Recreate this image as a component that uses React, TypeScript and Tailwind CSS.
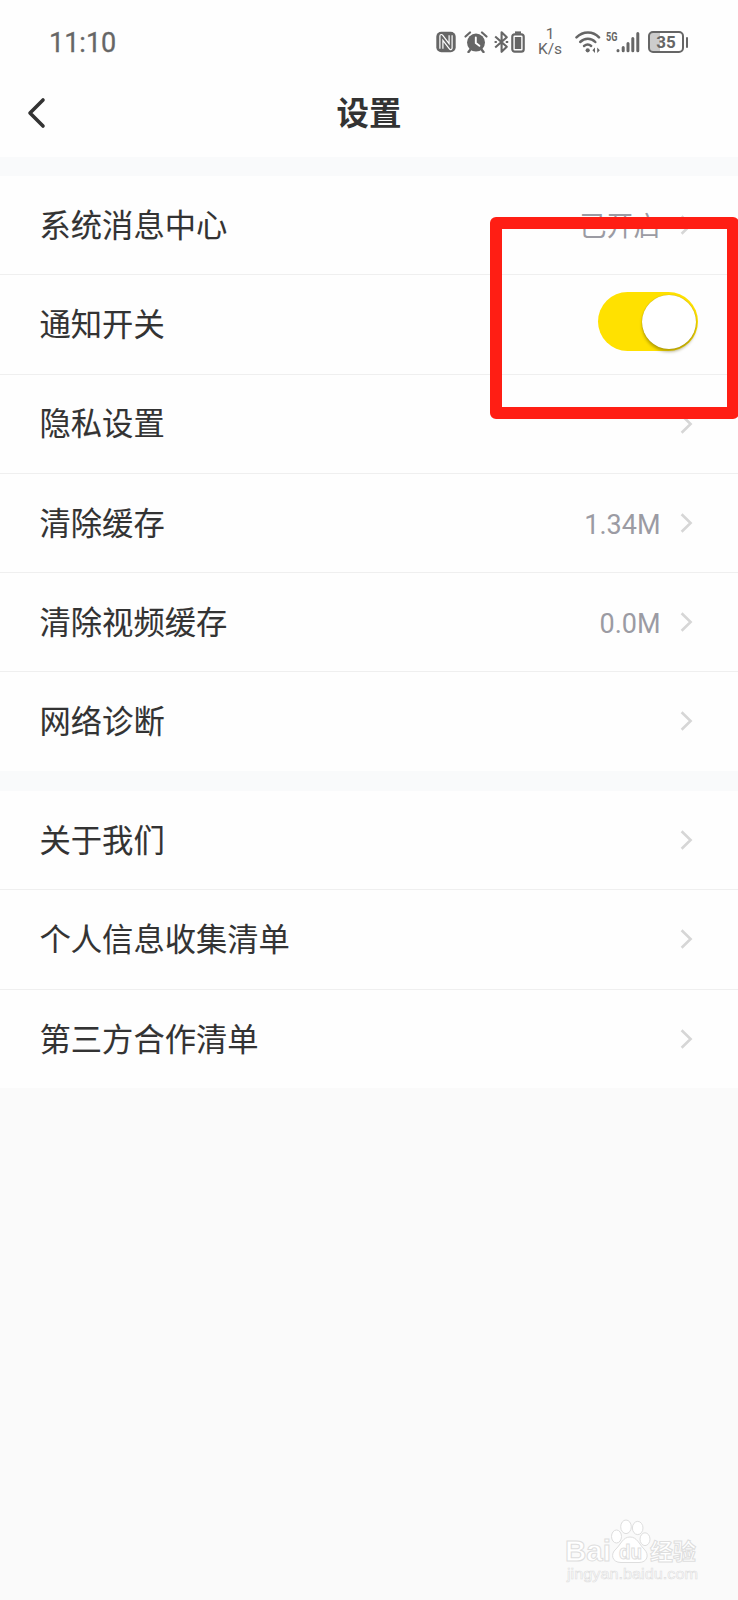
type RowItem = {
    label: string;
    value?: string;
    toggle?: boolean;
};

const generalItems: RowItem[] = [
    { label: '系统消息中心', value: '已开启' },
    { label: '通知开关', toggle: true },
    { label: '隐私设置' },
    { label: '清除缓存', value: '1.34M' },
    { label: '清除视频缓存', value: '0.0M' },
    { label: '网络诊断' },
];

const aboutItems: RowItem[] = [
    { label: '关于我们' },
    { label: '个人信息收集清单' },
    { label: '第三方合作清单' },
];

const StatusBar = () => {
    return (
        <div className="flex h-[84px] items-center pl-[49px] pr-[50px] text-[#666]">
            <span className="pt-[2px] font-['Roboto','Noto_Sans_CJK_SC',sans-serif] text-[27px] leading-none [-webkit-text-stroke:0.3px_#666]">11:10</span>
            <div className="ml-auto flex items-center">
                {/* nfc */}
                <svg className="mr-2" width="20" height="22" viewBox="0 0 20 22" fill="none">
                    <rect x="0.3" y="0.8" width="19.4" height="20.4" rx="5" fill="#666" />
                    <path d="M5.4 17.8V5L14.6 17V4.2" stroke="#fff" strokeWidth="4.2" strokeLinejoin="round" />
                    <path d="M5.4 19V5L14.6 17V3" stroke="#666" strokeWidth="1.8" strokeLinejoin="round" />
                </svg>
                {/* alarm */}
                <svg className="mr-[6px]" width="24" height="22" viewBox="0 0 24 22" fill="none">
                    <circle cx="12" cy="11.6" r="9" fill="#666" />
                    <path d="M6.5 18.5L4.5 21M17.5 18.5L19.5 21" stroke="#666" strokeWidth="2.4" strokeLinecap="round" />
                    <path d="M1.5 5.5L6 1.5M22.5 5.5L18 1.5" stroke="#666" strokeWidth="2.2" strokeLinecap="round" />
                    <path d="M11.8 6.5V12L15.4 14.8" stroke="#fff" strokeWidth="1.9" strokeLinecap="round" />
                </svg>
                {/* bluetooth */}
                <svg className="mr-[2px]" width="15" height="24" viewBox="0 0 15 24" fill="none" stroke="#666" strokeWidth="2.1">
                    <path d="M1.2 6.5L12.8 16.8L7.6 21.8V2.2L12.8 7.2L1.2 17.5" strokeLinejoin="round" />
                    <path d="M0.6 12H2.8M11.8 12H14.2" />
                </svg>
                <svg className="mr-[13px]" width="14" height="22" viewBox="0 0 14 22" fill="none">
                    <path d="M4 1.6H10" stroke="#666" strokeWidth="2.4" />
                    <rect x="1.3" y="3.3" width="11.4" height="17.4" rx="2.4" stroke="#666" strokeWidth="2.2" />
                    <rect x="3.8" y="6" width="6.4" height="12" fill="#666" />
                </svg>
                <div className="mr-[13px] flex w-[24px] flex-col items-center font-['Roboto',sans-serif] text-[15.5px] leading-[15px]">
                    <span>1</span>
                    <span>K/s</span>
                </div>
                {/* wifi */}
                <svg className="mr-[5px]" width="26" height="22" viewBox="0 0 26 22" fill="none" stroke="#666">
                    <path d="M1.5 6.4C8 -0.2 18 -0.2 24 6.4" strokeWidth="2.5" strokeLinecap="round" />
                    <path d="M5.2 11C9.5 6.8 16.2 6.8 20.3 11" strokeWidth="2.5" strokeLinecap="round" />
                    <path d="M9 15C11.4 13 14 13 16.2 15" strokeWidth="2.4" strokeLinecap="round" />
                    <circle cx="12.7" cy="19.3" r="2.1" fill="#666" stroke="none" />
                    <path d="M20 16.5V22L17.4 19.2ZM22.2 16.5V22L24.8 19.2Z" fill="#666" stroke="none" />
                </svg>
                <span className="mb-[12px] w-[10px] origin-left scale-x-[.7] font-['Roboto',sans-serif] text-[13px] font-bold leading-none">5G</span>
                <svg className="mr-2" width="24" height="22" viewBox="0 0 24 22" stroke="#666" strokeWidth="3" strokeLinecap="round">
                    <path d="M2 19.6V19.8M7.2 16.5V19.8M12 12.5V19.8M16.8 7.5V19.8M21.8 2.6V19.8" />
                </svg>
                {/* battery */}
                <div className="flex items-center">
                    <div className="flex h-[22px] w-[36px] items-center justify-center rounded-[5px] border-2 border-[#666] bg-linear-to-r from-[#ccc] from-[32%] to-white to-[32%] pt-px font-['Roboto',sans-serif] text-[17px] font-bold leading-none">
                        35
                    </div>
                    <div className="ml-[2px] h-[11px] w-[2px] rounded-full bg-[#666]" />
                </div>
            </div>
        </div>
    );
};

const Toggle = () => {
    return (
        <div className="mb-[5px] flex h-[59px] w-[100px] items-center justify-end rounded-full bg-[#ffe100] pr-[2px]">
            <div className="size-[54px] rounded-full bg-white shadow-[0_3px_3px_rgba(90,80,0,0.4),0_0_1px_rgba(90,80,0,0.5)]" />
        </div>
    );
};

const Row = ({ item }: { item: RowItem }) => {
    return (
        <div className="flex flex-1 items-center border-b border-[#efefef] pl-[39.5px] last:border-b-0">
            <span className="pb-[3px] text-[31.3px] leading-none text-[#333] [-webkit-text-stroke:0.1px_#333]">{item.label}</span>
            {item.toggle ? (
                <div className="ml-auto mr-10">
                    <Toggle />
                </div>
            ) : (
                <div className="ml-auto mr-[45px] flex items-center">
                    {item.value && (
                        <span className="mr-[19.5px] pt-[5px] font-['Roboto','Noto_Sans_CJK_SC',sans-serif] text-[27px] leading-none text-[#9b9ba3]">
                            {item.value}
                        </span>
                    )}
                    <svg width="13" height="20" viewBox="0 0 13 20" fill="none" stroke="#d6d6d6" strokeWidth="2.6">
                        <path d="M1.6 1.2L10.6 10L1.6 18.8" />
                    </svg>
                </div>
            )}
        </div>
    );
};

const Watermark = () => {
    return (
        <svg className="absolute bottom-[12px] right-[36px]" width="138" height="70" viewBox="0 0 138 70" fill="#fff" stroke="#dedede" strokeWidth="1">
            <g fontFamily="'Liberation Sans', sans-serif" fontWeight="bold">
                <text x="1" y="43" fontSize="29" textLength="46" lengthAdjust="spacingAndGlyphs">Bai</text>
                <path d="M66 19C73 19 75 26 80 31C86 37 83 44.5 75 44.5H57C48 44.5 46 36 52 31C57 26 59 19 66 19Z" />
                <ellipse cx="52.5" cy="18.5" rx="5" ry="6.5" />
                <ellipse cx="62" cy="8.8" rx="5.3" ry="6.8" />
                <ellipse cx="73.7" cy="10" rx="5.3" ry="6.6" />
                <ellipse cx="81" cy="21.2" rx="5" ry="6.4" />
                <text x="55" y="41" fontSize="20" textLength="23" lengthAdjust="spacingAndGlyphs">du</text>
            </g>
            <text x="86" y="42" fontFamily="'Noto Sans CJK SC', sans-serif" fontWeight="bold" fontSize="23" textLength="46" lengthAdjust="spacingAndGlyphs">经验</text>
            <text x="3" y="61" fontFamily="'Liberation Sans', sans-serif" fontSize="15.5" strokeWidth="0.6" textLength="131" lengthAdjust="spacingAndGlyphs">jingyan.baidu.com</text>
        </svg>
    );
};

const App = () => {
    return (
        <div className="relative flex h-[1600px] w-[738px] flex-col overflow-hidden bg-[#fafafa] font-['Noto_Sans_CJK_SC',sans-serif]">
            <header className="h-[157px] bg-[#fefefe]">
                <StatusBar />
                <div className="grid h-[58px] grid-cols-3 items-center">
                    <svg className="ml-[27px]" width="20" height="32" viewBox="0 0 20 32" fill="none" stroke="#333" strokeWidth="3.6" strokeLinecap="round" strokeLinejoin="round">
                        <path d="M16 3L3 16L16 29" />
                    </svg>
                    <h1 className="pb-[3px] text-center text-[32.5px] font-bold leading-none text-[#333]">设置</h1>
                </div>
            </header>

            <div className="h-[19px] bg-[#f9fafb]" />
            <section className="flex h-[594.5px] flex-col bg-[#fefefe]">
                {generalItems.map((item) => (
                    <Row key={item.label} item={item} />
                ))}
            </section>
            <div className="h-5 bg-[#f9fafb]" />
            <section className="flex h-[297.5px] flex-col bg-[#fefefe]">
                {aboutItems.map((item) => (
                    <Row key={item.label} item={item} />
                ))}
            </section>

            {/* highlight around the notification switch */}
            <div className="absolute left-[490px] top-[217px] h-[202px] w-[249px] rounded-[6px] border-[12px] border-[#ff1e14]" />
            <Watermark />
        </div>
    );
};

export default App;
